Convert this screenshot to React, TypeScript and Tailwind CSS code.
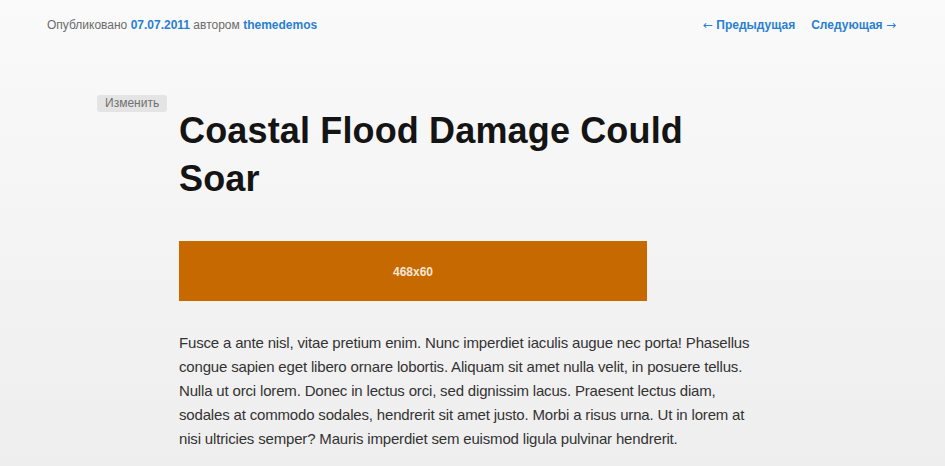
import React from 'react';

const body =
  'Fusce a ante nisl, vitae pretium enim. Nunc imperdiet iaculis augue nec porta! Phasellus congue sapien eget libero ornare lobortis. Aliquam sit amet nulla velit, in posuere tellus. Nulla ut orci lorem. Donec in lectus orci, sed dignissim lacus. Praesent lectus diam, sodales at commodo sodales, hendrerit sit amet justo. Morbi a risus urna. Ut in lorem at nisi ultricies semper? Mauris imperdiet sem euismod ligula pulvinar hendrerit.';

const Arrow = ({ children }: { children: React.ReactNode }) => (
  <span className="font-['DejaVu_Sans',sans-serif] text-[12px] font-normal">{children}</span>
);

export default function App() {
  return (
    <div className="h-[466px] overflow-hidden bg-gradient-to-b from-[#fafafa] to-[#eeeeee] font-['Liberation_Sans',Arial,sans-serif]">
      {/* post meta + navigation */}
      <div className="flex items-center justify-between pl-[47px] pr-[49px] pt-[17px] text-[12px] leading-[17px]">
        <div className="text-[#6b6b6b]">
          Опубликовано <a className="font-bold text-[#2a7fd2]">07.07.2011</a> автором{' '}
          <a className="font-bold text-[#2a7fd2]">themedemos</a>
        </div>
        <div className="flex gap-4 font-bold text-[#2a7fd2]">
          <a>
            <Arrow>←</Arrow> Предыдущая
          </a>
          <a>
            Следующая <Arrow>→</Arrow>
          </a>
        </div>
      </div>

      {/* article */}
      <div className="flex pl-[97px] pt-[56px]">
        <div className="w-[82px] shrink-0">
          <span className="inline-block rounded-[3px] bg-[#e4e4e4] px-2 text-[12px] leading-[17px] text-[#707070]">
            Изменить
          </span>
        </div>
        <div className="w-[580px] pt-[17px]">
          <h1 className="text-[36px] font-bold leading-[48px] tracking-[0.15px] text-[#141414]">
            Coastal Flood Damage Could Soar
          </h1>
          <div className="mt-[38px] flex h-[60px] w-[468px] items-center justify-center bg-[#c66a00] pt-px text-[12px] font-bold text-[#f5e6d5]">
            468x60
          </div>
          <p className="mt-[30px] text-[15px] leading-[24px] tracking-[-0.17px] text-[#333333]">{body}</p>
        </div>
      </div>
    </div>
  );
}
